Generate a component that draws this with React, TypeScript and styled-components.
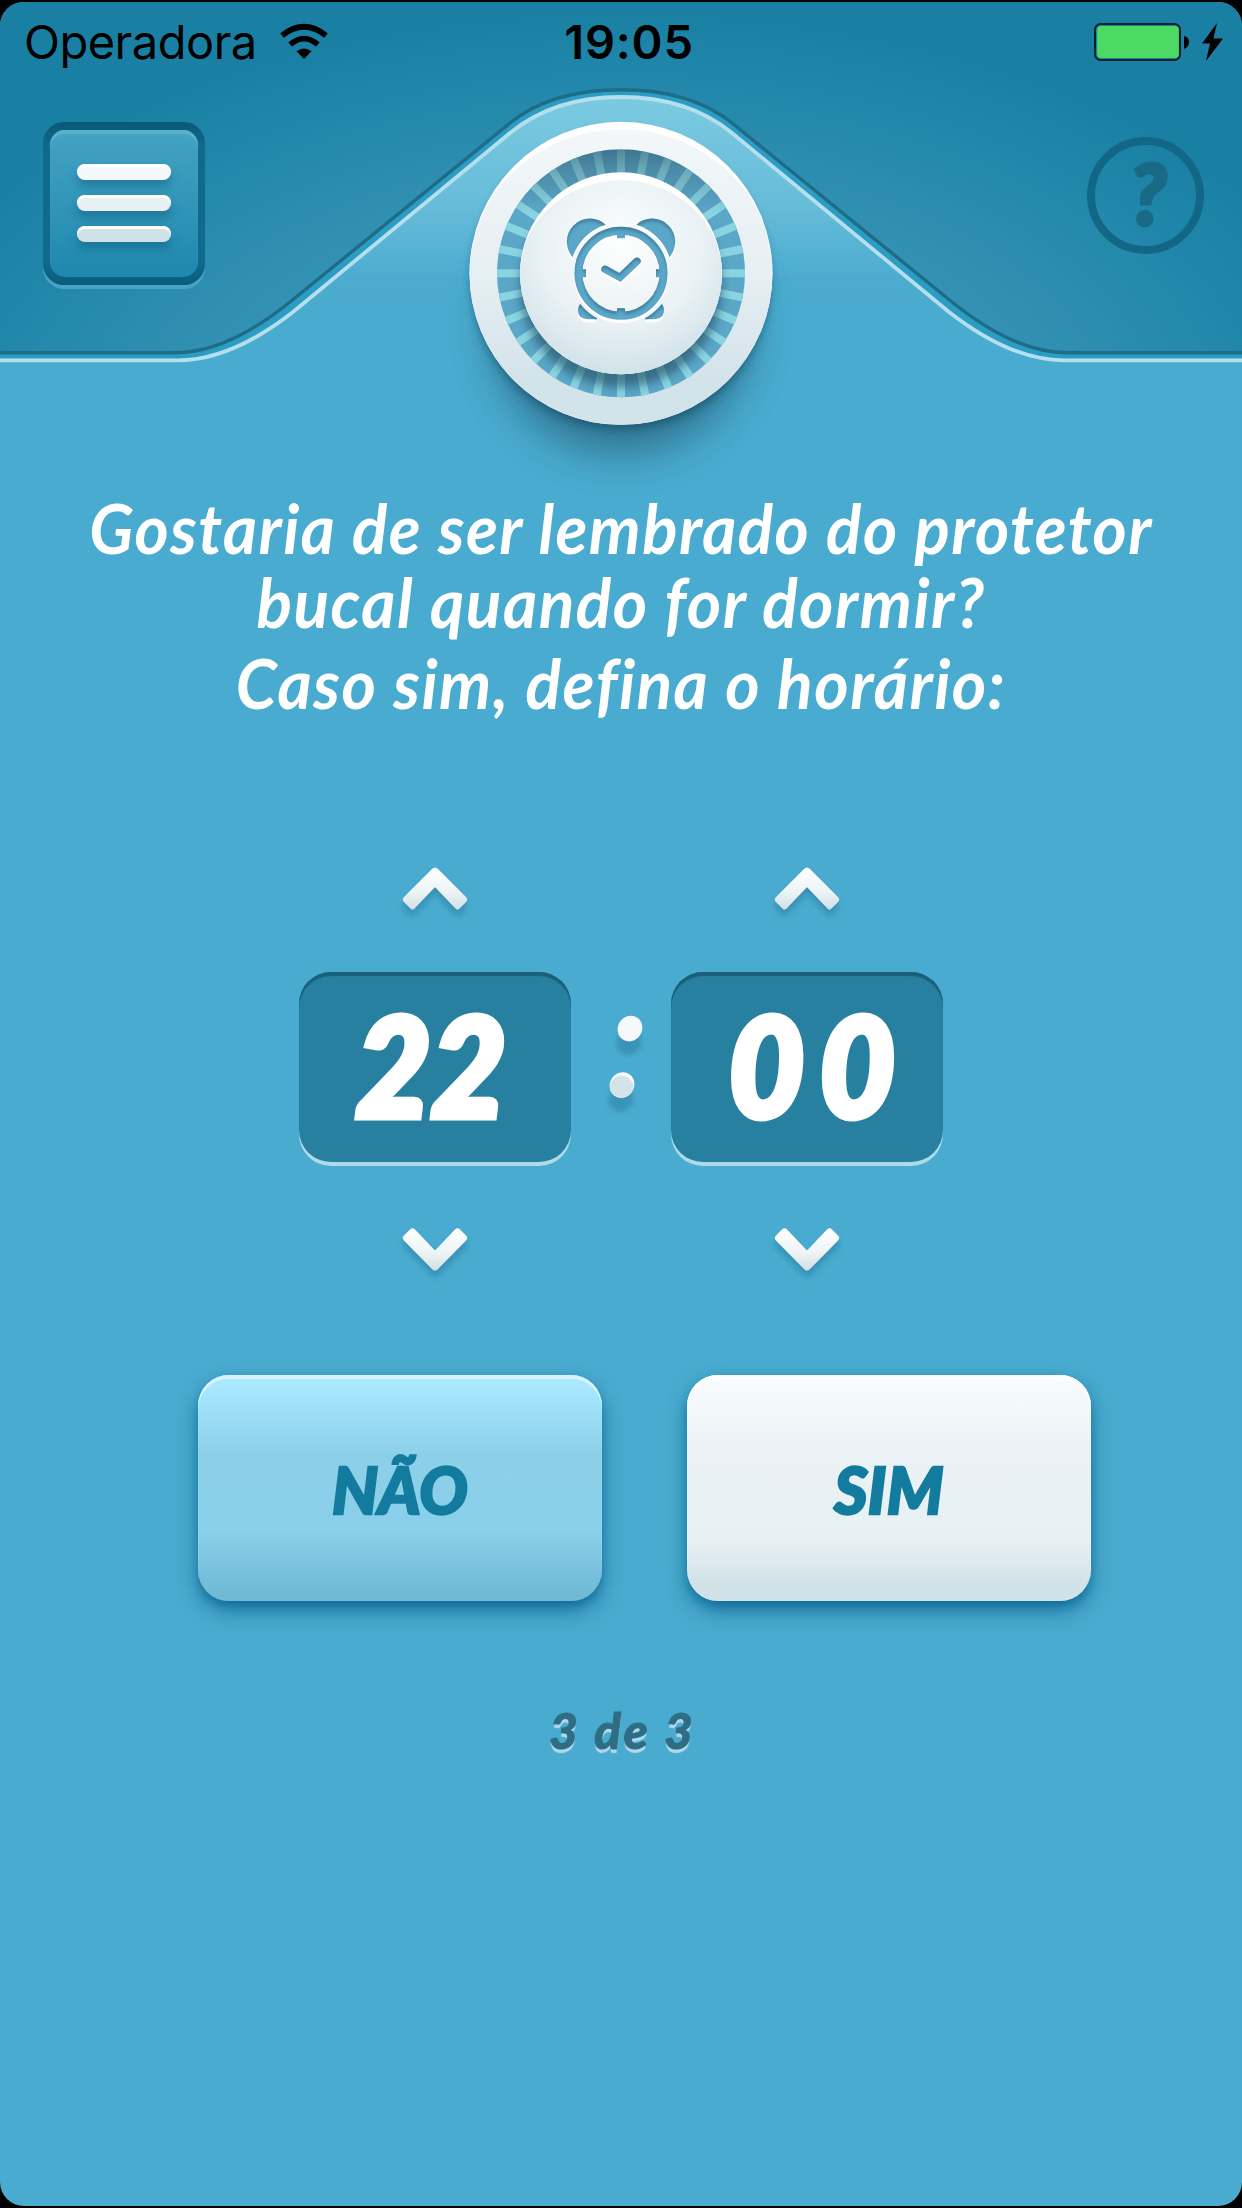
import React, { useState } from "react";
import styled, { createGlobalStyle } from "styled-components";

const GlobalStyle = createGlobalStyle`
  * { box-sizing: border-box; }
  html, body { margin: 0; padding: 0; background: #000; }
  button { border: 0; padding: 0; margin: 0; background: none; font: inherit; display: block; }
  svg { display: block; overflow: visible; }
`;

const lato = `Lato, "Open Sans", sans-serif`;

const Screen = styled.main`
  width: 1242px;
  height: 2208px;
  border: solid #000;
  border-width: 2px 0;
  background: #000;
  font-family: ${lato};
`;

const Surface = styled.div`
  height: 2204px;
  border-radius: 24px;
  background: #49abcf;
  overflow: hidden;
  display: flex;
  flex-direction: column;
  align-items: center;
`;

const Header = styled.header`
  position: relative;
  width: 100%;
  height: 478px;
  flex: none;
`;

const HeaderArt = styled.svg`
  position: absolute;
  left: 0;
  top: -2px;
`;

const StatusBar = styled.div`
  position: relative;
  display: grid;
  grid-template-columns: 1fr auto 1fr;
  align-items: center;
  height: 82px;
  padding: 0 18px 3px 24px;
  color: #000;
  font-family: Inter, Roboto, sans-serif;
  font-size: 47px;
`;

const Carrier = styled.div`
  display: flex;
  align-items: center;
  gap: 23px;
  letter-spacing: -0.5px;
`;

const Clock = styled.div`
  font-weight: 600;
  letter-spacing: 0.8px;
  padding-left: 10px;
`;

const Power = styled.div`
  display: flex;
  justify-content: flex-end;
`;

const Toolbar = styled.div`
  position: relative;
  display: flex;
  justify-content: space-between;
  align-items: flex-start;
  padding: 38px 38px 0 43px;
`;

const MenuButton = styled.button`
  width: 162px;
  height: 163px;
  padding: 8px 7px;
  border-radius: 21px;
  background: linear-gradient(#0a5877, #106a8b 15%, #106a8b 85%, #0a5d7c);
  box-shadow: 0 4px 0 #4aa3c3;
`;

const MenuFace = styled.span`
  display: flex;
  flex-direction: column;
  align-items: center;
  gap: 15px;
  height: 147px;
  padding-top: 34px;
  border-radius: 15px;
  background: linear-gradient(#44a3c3, #1f88ae);
  box-shadow: inset 0 4px 1px #5ab1ce;
`;

const MenuBar = styled.span<{ $tone: string }>`
  width: 94px;
  height: 16px;
  border-radius: 8px;
  background: ${(p) => p.$tone};
  box-shadow: inset 0 3px 1px #fff, 0 7px 8px rgba(10, 90, 125, 0.45);
`;

const HelpButton = styled.button`
  width: 117px;
  height: 117px;
  margin-top: 15px;
  border: 8px solid #126786;
  border-radius: 50%;
  color: #186a87;
  font: italic 900 83px/93px ${lato};
  -webkit-text-stroke: 4px #186a87;
  padding: 0 0 4px 5px;
`;

const Prompt = styled.h1`
  margin: 0;
  width: 100%;
  color: #fff;
  font-size: 68px;
  font-weight: 700;
  font-style: italic;
  text-align: center;
  white-space: nowrap;
`;

const PromptLine = styled.span<{ $height: number; $stretch: number }>`
  display: block;
  height: ${(p) => p.$height}px;
  line-height: ${(p) => p.$height}px;
  letter-spacing: 1.5px;
  transform: scaleX(${(p) => p.$stretch});
`;

const TimePicker = styled.section`
  display: flex;
  align-items: center;
  width: 644px;
  margin-top: 130px;
`;

const Column = styled.div`
  display: flex;
  flex-direction: column;
  align-items: center;
  width: 272px;
`;

const Digits = styled.output`
  display: flex;
  align-items: flex-start;
  justify-content: center;
  width: 272px;
  height: 190px;
  margin: 62px 0 66px;
  border-radius: 32px;
  background: #2780a0;
  color: #fff;
  box-shadow: inset 0 4px 1px #1a5f78, 0 4px 0 #b0daea;
`;

const DigitText = styled.span<{ $spacing: number; $indent: number }>`
  font: italic 900 138px/183px ${lato};
  -webkit-text-stroke: 7px #fff;
  paint-order: stroke fill;
  stroke-linejoin: round;
  letter-spacing: ${(p) => p.$spacing}px;
  margin-left: ${(p) => p.$indent}px;
  transform: scaleX(0.94);
`;

const Separator = styled.div`
  width: 100px;
  padding: 0 0 24px 10px;
  display: flex;
  justify-content: center;
`;

const Actions = styled.div`
  display: flex;
  gap: 85px;
  margin: 104px 0 0 47px;
`;

const ActionButton = styled.button<{ $primary?: boolean }>`
  width: 404px;
  height: 226px;
  padding-top: 4px;
  border-radius: 31px;
  color: #137c9e;
  font: italic 900 64px/222px ${lato};
  letter-spacing: 0.4px;
  -webkit-text-stroke: 2.5px #137c9e;
  background: ${(p) =>
    p.$primary
      ? "linear-gradient(#f9fcfe 0%, #eaf2f5 35%, #e7f0f3 74%, #d2e2e9 92%, #d0e1e7 100%)"
      : "linear-gradient(#a9e8ff 5%, #8ccfe9 36%, #8ad0ea 68%, #6fb9d5 98%)"};
  box-shadow: inset 0 4px 1px ${(p) => (p.$primary ? "#ffffff" : "#d6f3ff")},
    0 10px 22px -2px rgba(0, 90, 135, 0.66), 0 6px 12px -2px rgba(0, 90, 135, 0.55);
`;

const Step = styled.p`
  margin: 91px 0 0;
  padding-left: 3px;
  color: #2f6d84;
  font: italic 900 49px/76px ${lato};
  letter-spacing: 3px;
  -webkit-text-stroke: 1px #2f6d84;
  text-shadow: 0 4px 1px #b0daea;
`;

const Wifi = () => (
  <svg width="48" height="36" viewBox="0 0 48 36">
    <g fill="none" stroke="#000" strokeWidth="5.6">
      <path d="M2 11.5Q24-6 46 11.5" />
      <path d="M10.2 20.5Q24 8.6 37.8 20.5" />
    </g>
    <path d="M16.5 27.2Q24 21.6 31.5 27.2L24 35Z" />
  </svg>
);

const Battery = () => (
  <svg width="130" height="38" viewBox="0 0 130 38">
    <rect x="1" y="1" width="85" height="36" rx="5.5" fill="none" stroke="#06202b" strokeWidth="2" />
    <rect x="3.2" y="3" width="81.6" height="32" rx="4" fill="#4dda64" />
    <path d="M90 13q5 1 5 6t-5 7Z" />
    <path d="M123 0L108 20.5H116L112 38L129 15.5H119.5Z" />
  </svg>
);

const ticks = Array.from({ length: 32 }, (_, i) => i * 11.25);

const Ridge = () => (
  <HeaderArt width="1242" height="480" viewBox="0 0 1242 480">
    <defs>
      <radialGradient id="sky" gradientUnits="userSpaceOnUse" cx="0" cy="0" r="1" gradientTransform="translate(621 430) scale(760 420)">
        <stop offset="0" stopColor="#4399ba" />
        <stop offset="0.5" stopColor="#3693b5" />
        <stop offset="0.84" stopColor="#2187aa" />
        <stop offset="1" stopColor="#1980a4" />
      </radialGradient>
      <linearGradient id="hill" gradientUnits="userSpaceOnUse" x1="0" y1="97" x2="0" y2="310">
        <stop offset="0" stopColor="#7bcae1" />
        <stop offset="0.5" stopColor="#67bcd9" />
        <stop offset="0.85" stopColor="#4cacd0" />
        <stop offset="1" stopColor="#49abcf" />
      </linearGradient>
      <linearGradient id="rim" x1="0" y1="0" x2="0" y2="1">
        <stop offset="0" stopColor="#f3f7f9" />
        <stop offset="0.5" stopColor="#e6eff3" />
        <stop offset="0.85" stopColor="#d3e3ea" />
        <stop offset="1" stopColor="#d1e2e8" />
      </linearGradient>
      <radialGradient id="knob" cx="0.5" cy="0.34" r="0.66">
        <stop offset="0" stopColor="#fdfefe" />
        <stop offset="0.6" stopColor="#eaf2f5" />
        <stop offset="1" stopColor="#d1e2e9" />
      </radialGradient>
      <linearGradient id="grooveShade" gradientUnits="userSpaceOnUse" x1="0" y1="-124" x2="0" y2="-60">
        <stop offset="0" stopColor="#2c5468" stopOpacity="0.6" />
        <stop offset="0.3" stopColor="#2c5468" stopOpacity="0.35" />
        <stop offset="1" stopColor="#2c5468" stopOpacity="0" />
      </linearGradient>
      <filter id="blurWide" x="-50%" y="-50%" width="200%" height="200%"><feGaussianBlur stdDeviation="19" /></filter>
      <filter id="blurNear" x="-50%" y="-50%" width="200%" height="200%"><feGaussianBlur stdDeviation="5" /></filter>
      <filter id="engrave" x="-20%" y="-20%" width="140%" height="140%">
        <feOffset in="SourceAlpha" dy="3" result="moved" />
        <feGaussianBlur in="moved" stdDeviation="1.6" result="soft" />
        <feComposite in="SourceAlpha" in2="soft" operator="out" result="edge" />
        <feFlood floodColor="#255a76" floodOpacity="0.6" />
        <feComposite in2="edge" operator="in" result="shade" />
        <feOffset in="SourceAlpha" dy="3" result="below" />
        <feFlood floodColor="#fff" />
        <feComposite in2="below" operator="in" result="light" />
        <feMerge>
          <feMergeNode in="light" />
          <feMergeNode in="SourceGraphic" />
          <feMergeNode in="shade" />
        </feMerge>
      </filter>
      <clipPath id="groove"><path clipRule="evenodd" d="M-124 0a124 124 0 1 0 248 0a124 124 0 1 0-248 0ZM-101 0a101 101 0 1 0 202 0a101 101 0 1 0-202 0Z" /></clipPath>
      <mask id="aroundClock" maskUnits="userSpaceOnUse" x="-80" y="-80" width="160" height="160">
        <rect x="-80" y="-80" width="160" height="160" fill="#fff" />
        <circle r="51" fill="#000" />
      </mask>
    </defs>
    <rect width="1242" height="353" fill="url(#sky)" />
    <path d="M0 354H175Q227 354 290 303L510 124Q551 91 621 91T732 124L952 303Q1015 354 1067 354H1242V365H0Z" fill="#2b9cc3" />
    <path d="M0 360H178Q231 360 293 312L510 133Q554 97 621 97T732 133L949 312Q1011 360 1064 360H1242V480H0Z" fill="url(#hill)" />
    <path d="M0 352.7H175Q227 352.7 290 302L510 123Q551 89.7 621 89.7T732 123L952 302Q1015 352.7 1067 352.7H1242" fill="none" stroke="#1f6c87" strokeWidth="3.4" />
    <path d="M0 360.3H178Q231 360.3 293 312L510 133Q554 97 621 97T732 133L949 312Q1011 360.3 1064 360.3H1242" fill="none" stroke="#b5dfed" strokeWidth="3.8" />

    <g transform="translate(621 273.3)">
      <circle cy="50" r="132" fill="#2b6680" opacity="0.75" filter="url(#blurWide)" />
      <circle cy="7" r="149" fill="#15506a" opacity="0.72" filter="url(#blurNear)" />
      <circle r="151.5" fill="#fff" />
      <path d="M-151.5 0A151.5 151.5 0 0 0 151.5 0A151.5 144 0 0 0-151.5 0Z" fill="url(#rim)" />
      <circle r="124" fill="#5ba7c8" />
      <g clipPath="url(#groove)">
        {ticks.map((a) => (
          <rect key={a} x="-4" y="-126" width="8" height="28" fill="#8ad4e2" transform={`rotate(${a})`} />
        ))}
        <rect x="-124" y="-124" width="248" height="70" fill="url(#grooveShade)" />
        <circle cy="13" r="101" fill="#214d60" opacity="0.62" filter="url(#blurNear)" />
      </g>
      <circle r="101" fill="#fff" />
      <path d="M-101 0A101 101 0 0 0 101 0A101 93 0 0 0-101 0Z" fill="url(#knob)" />
      <g filter="url(#engrave)">
        <g mask="url(#aroundClock)" fill="#5ba7c9">
          <circle cx="-31" cy="-31.5" r="23.2" />
          <circle cx="31" cy="-31.5" r="23.2" />
          <path d="M-41 31C-44 35-43 41-41 43Q-38 46-32 46H-24V28Z" />
          <path d="M41 31C44 35 43 41 41 43Q38 46 32 46H24V28Z" />
        </g>
        <circle r="42.5" fill="none" stroke="#5ba7c9" strokeWidth="8" />
        <path d="M0-40V-35M0 40V35M-40 0H-35M40 0H35" stroke="#5ba7c9" strokeWidth="8" />
        <path d="M-16-4L-1 4.2L16-12" fill="none" stroke="#5ba7c9" strokeWidth="7.4" strokeLinecap="round" />
      </g>
    </g>
  </HeaderArt>
);

const Arrow = ({ down }: { down?: boolean }) => (
  <svg width="66" height="43" viewBox="0 0 66 43">
    <defs>
      <linearGradient id="arrowFill" gradientUnits="userSpaceOnUse" x1="0" y1="2" x2="0" y2="43">
        <stop offset="0" stopColor="#ffffff" />
        <stop offset="0.55" stopColor="#eef4f6" />
        <stop offset="1" stopColor="#cfdfe5" />
      </linearGradient>
      <filter id="arrowShadow" x="-30%" y="-30%" width="160%" height="190%">
        <feDropShadow dx="0" dy="6" stdDeviation="3" floodColor="#1c6485" floodOpacity="0.4" />
      </filter>
    </defs>
    <path
      d={
        down
          ? "M8 1.5Q10.5-1 13 1.5L33 22.5L53 1.5Q55.5-1 58 1.5L64 7.5Q66.5 10 64 12.5L36 41Q33 44 30 41L2 12.5Q-0.5 10 2 7.5Z"
          : "M30 2Q33-1 36 2L64 30Q66.5 32.5 64 35L58 41Q55.5 44 53 41L33 20L13 41Q10.5 44 8 41L2 35Q-0.5 32.5 2 30Z"
      }
      fill="url(#arrowFill)"
      filter="url(#arrowShadow)"
    />
  </svg>
);

const Dots = () => (
  <svg width="34" height="82" viewBox="0 0 34 82">
    <defs>
      <filter id="dotShadow" x="-60%" y="-60%" width="220%" height="260%">
        <feDropShadow dx="-1" dy="14" stdDeviation="2" floodColor="#22759b" floodOpacity="0.42" />
      </filter>
    </defs>
    <g filter="url(#dotShadow)">
      <ellipse cx="21" cy="12.5" rx="12" ry="13" transform="rotate(35 21 12.5)" fill="#f5f9fb" />
    </g>
    <g filter="url(#dotShadow)">
      <ellipse cx="13" cy="69" rx="12" ry="13" transform="rotate(35 13 69)" fill="#fbfdfe" />
    </g>
    <ellipse cx="12.6" cy="70.8" rx="11.6" ry="11" fill="#d4e3e9" />
  </svg>
);

const pad = (n: number) => String(n).padStart(2, "0");

type UnitProps = { value: number; max: number; spacing: number; indent: number; name: string; onChange: (n: number) => void };

const TimeUnit = ({ value, max, spacing, indent, name, onChange }: UnitProps) => (
  <Column>
    <button aria-label={`${name} +`} onClick={() => onChange((value + 1) % max)}>
      <Arrow />
    </button>
    <Digits>
      <DigitText $spacing={spacing} $indent={indent}>{pad(value)}</DigitText>
    </Digits>
    <button aria-label={`${name} -`} onClick={() => onChange((value + max - 1) % max)}>
      <Arrow down />
    </button>
  </Column>
);

export default function App() {
  const [hour, setHour] = useState(22);
  const [minute, setMinute] = useState(0);

  return (
    <>
      <GlobalStyle />
      <Screen>
        <Surface>
          <Header>
            <Ridge />
            <StatusBar>
              <Carrier>
                Operadora
                <Wifi />
              </Carrier>
              <Clock>19:05</Clock>
              <Power>
                <Battery />
              </Power>
            </StatusBar>
            <Toolbar>
              <MenuButton aria-label="Menu">
                <MenuFace>
                  <MenuBar $tone="#f3f8fb" />
                  <MenuBar $tone="#e8f0f4" />
                  <MenuBar $tone="#d1e1e8" />
                </MenuFace>
              </MenuButton>
              <HelpButton>?</HelpButton>
            </Toolbar>
          </Header>

          <Prompt>
            <PromptLine $height={95} $stretch={0.963}>Gostaria de ser lembrado do protetor</PromptLine>
            <PromptLine $height={53} $stretch={0.968}>bucal quando for dormir?</PromptLine>
            <PromptLine $height={109} $stretch={0.969}>Caso sim, defina o horário:</PromptLine>
          </Prompt>

          <TimePicker>
            <TimeUnit name="Hora" value={hour} max={24} spacing={0} indent={-8} onChange={setHour} />
            <Separator>
              <Dots />
            </Separator>
            <TimeUnit name="Minuto" value={minute} max={60} spacing={16.5} indent={25} onChange={setMinute} />
          </TimePicker>

          <Actions>
            <ActionButton>NÃO</ActionButton>
            <ActionButton $primary>SIM</ActionButton>
          </Actions>

          <Step>3 de 3</Step>
        </Surface>
      </Screen>
    </>
  );
}
